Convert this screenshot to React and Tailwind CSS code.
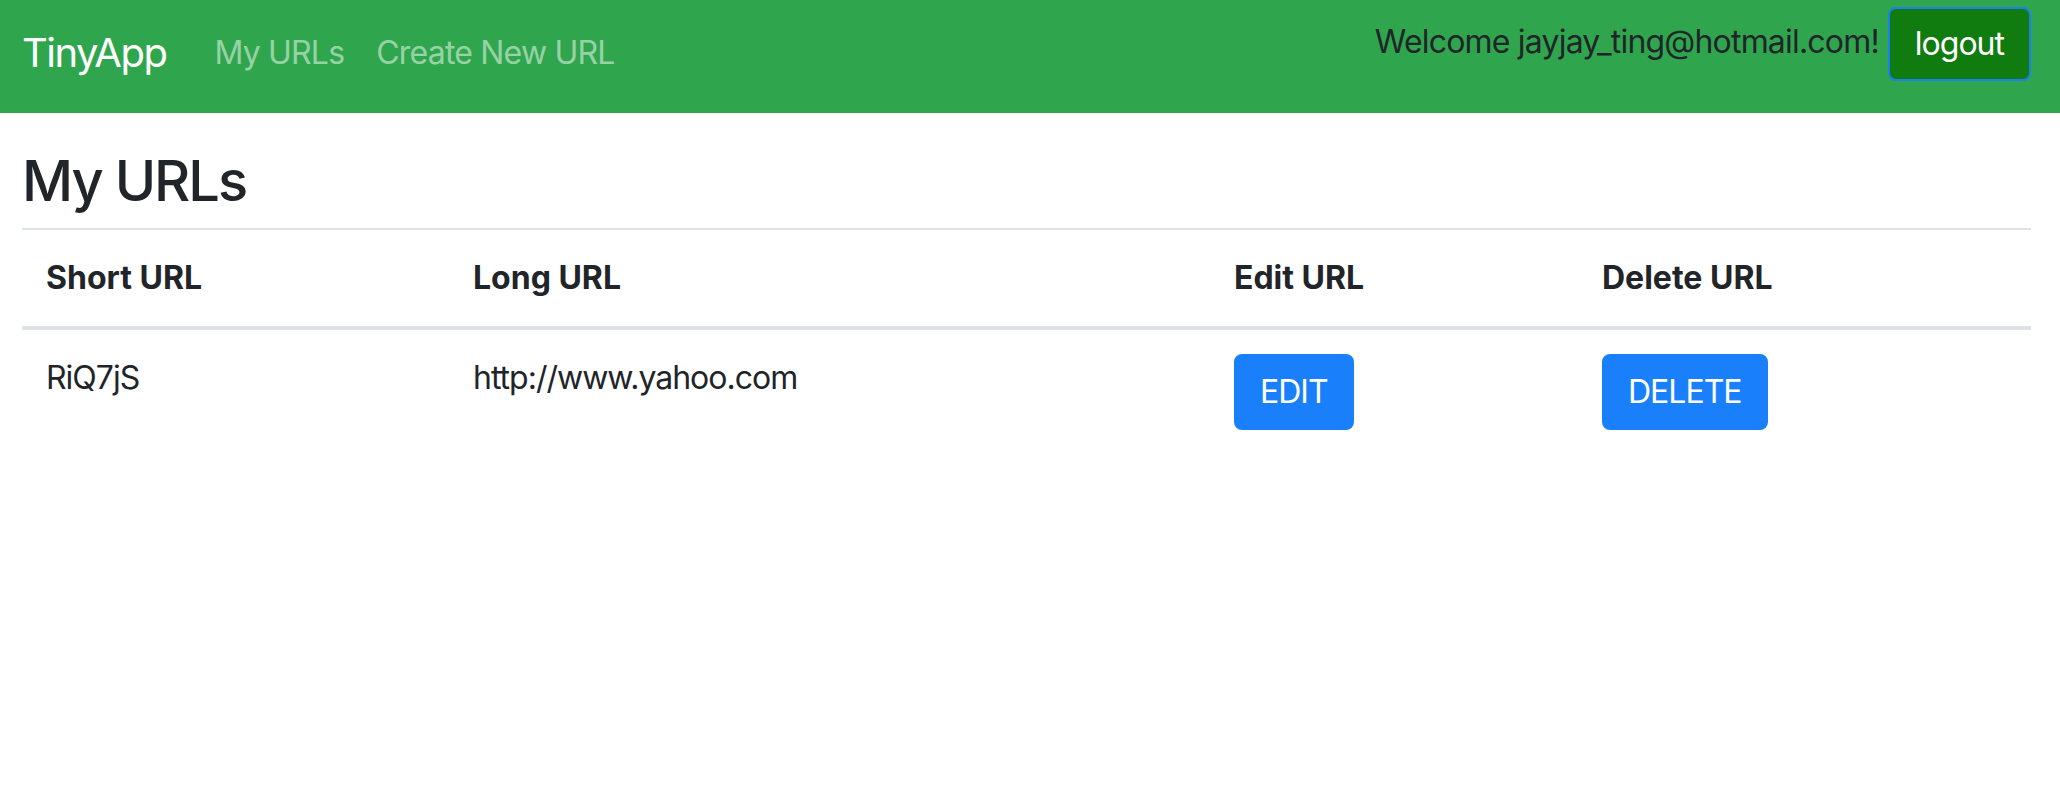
export default function App() {
  const rows = [{ short: "RiQ7jS", long: "http://www.yahoo.com" }];

  return (
    <div className="min-h-screen bg-white font-['Inter',sans-serif] text-[#212529]">
      <nav className="h-[113px] bg-[#2fa64d] pl-[22px] pr-[29px] flex items-start">
        <a href="#" className="mt-[29px] mr-8 text-[40px] leading-[48px] tracking-[-1.5px] text-white">
          TinyApp
        </a>
        <a href="#" className="mt-[29px] px-4 text-[32px] leading-[48px] tracking-[-0.8px] text-white/50">
          My URLs
        </a>
        <a href="#" className="mt-[29px] px-4 text-[32px] leading-[48px] tracking-[-0.8px] text-white/50">
          Create New URL
        </a>
        <div className="ml-auto flex items-start">
          <span className="mt-[18px] mr-[9px] text-[32px] leading-[48px] tracking-[-0.8px] text-[#212529]">
            Welcome jayjay_ting@hotmail.com!
          </span>
          <button className="mt-[7px] rounded-[8px] border-2 border-[#1a7ff5] bg-[#107b0f] px-[25px] py-[11px] text-[32px] leading-[48px] tracking-[-1px] text-white">
            logout
          </button>
        </div>
      </nav>

      <main className="pl-[22px] pr-[29px]">
        <h3 className="mt-[35px] text-[56px] leading-[67px] font-medium tracking-[-2px]">My URLs</h3>
        <hr className="mt-[13px] border-t-2 border-[#dee2e6]" />
        <table className="w-full table-fixed border-collapse text-[32px] leading-[48px]">
          <colgroup>
            <col className="w-[427px]" />
            <col className="w-[761px]" />
            <col className="w-[368px]" />
            <col />
          </colgroup>
          <thead>
            <tr className="border-b-4 border-[#dee2e6]">
              <th className="px-6 py-6 text-left font-bold">Short URL</th>
              <th className="px-6 py-6 text-left font-bold">Long URL</th>
              <th className="px-6 py-6 text-left font-bold">Edit URL</th>
              <th className="px-6 py-6 text-left font-bold">Delete URL</th>
            </tr>
          </thead>
          <tbody className="tracking-[-1px]">
            {rows.map((row) => (
              <tr key={row.short}>
                <td className="px-6 py-6 align-top">{row.short}</td>
                <td className="px-6 py-6 align-top">{row.long}</td>
                <td className="px-6 py-6 align-top">
                  <button className="rounded-[8px] border-2 border-[#1a7ffa] bg-[#1a7ffa] px-6 py-3 text-white">
                    EDIT
                  </button>
                </td>
                <td className="px-6 py-6 align-top">
                  <button className="rounded-[8px] border-2 border-[#1a7ffa] bg-[#1a7ffa] px-6 py-3 text-white">
                    DELETE
                  </button>
                </td>
              </tr>
            ))}
          </tbody>
        </table>
      </main>
    </div>
  );
}
